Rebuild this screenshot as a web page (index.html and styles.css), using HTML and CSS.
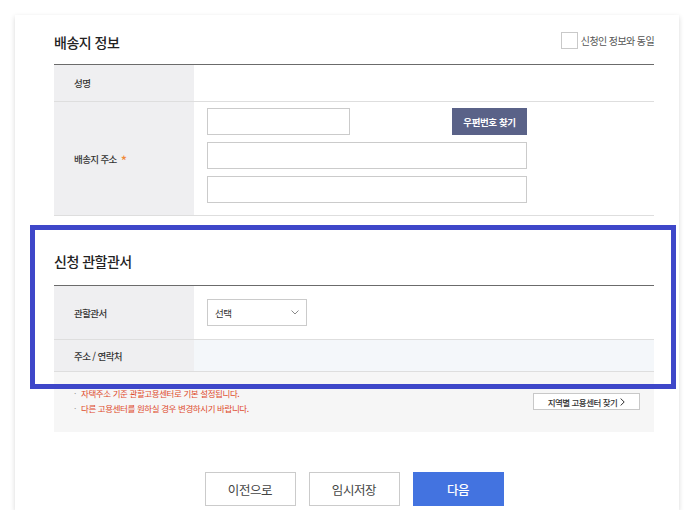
FILE: index.html
```html
<!DOCTYPE html>
<html lang="ko">
<head>
<meta charset="utf-8">
<title>배송지 정보</title>
<link rel="stylesheet" href="styles.css">
</head>
<body>
<div class="card">
  <div class="sec-head">
    <h2 class="sec-title">배송지 정보</h2>
    <label class="same">
      <span class="chk"></span>
      <span class="same-text">신청인 정보와 동일</span>
    </label>
  </div>
  <div class="table">
    <div class="row row-name">
      <div class="th">성명</div>
      <div class="td"></div>
    </div>
    <div class="row row-addr">
      <div class="th">배송지 주소 <span class="req">*</span></div>
      <div class="td td-addr">
        <div class="zip-line">
          <span class="input input-zip"></span>
          <button class="btn-zip" type="button">우편번호 찾기</button>
        </div>
        <span class="input input-wide"></span>
        <span class="input input-wide"></span>
      </div>
    </div>
  </div>

  <div class="sec-head sec-head-2">
    <h2 class="sec-title">신청 관할관서</h2>
  </div>
  <div class="table">
    <div class="row row-office">
      <div class="th">관할관서</div>
      <div class="td td-office">
        <div class="select">
          <span>선택</span>
          <svg class="sel-arrow" width="8" height="5" viewBox="0 0 8 5"><polyline points="0.5,0.5 4,4 7.5,0.5" fill="none" stroke="#8a8a8a" stroke-width="1"/></svg>
        </div>
      </div>
    </div>
    <div class="row row-contact">
      <div class="th">주소 / 연락처</div>
      <div class="td td-contact"></div>
    </div>
  </div>
  <div class="notes">
    <ul class="note-list">
      <li><span class="dot">·</span>자택주소 기준 관할고용센터로 기본 설정됩니다.</li>
      <li><span class="dot">·</span>다른 고용센터를 원하실 경우 변경하시기 바랍니다.</li>
    </ul>
    <button class="btn-find" type="button">지역별 고용센터 찾기
      <svg width="5" height="8" viewBox="0 0 5 8"><polyline points="0.6,0.5 4.2,4 0.6,7.5" fill="none" stroke="#333" stroke-width="1"/></svg>
    </button>
  </div>

  <div class="actions">
    <button class="btn btn-line" type="button">이전으로</button>
    <button class="btn btn-line" type="button">임시저장</button>
    <button class="btn btn-primary" type="button">다음</button>
  </div>

  <div class="highlight"></div>
</div>
</body>
</html>
```

FILE: styles.css
```css
html, body {
  margin: 0;
  padding: 0;
  background: #ffffff;
}
body {
  font-family: "Noto Sans CJK KR", "Noto Sans", sans-serif;
  color: #333;
  padding-top: 15px;
}
.card {
  position: relative;
  margin: 0 15px;
  width: 664px;
  height: 495px;
  box-sizing: border-box;
  padding: 0 25px 0 39px;
  background: #fff;
  box-shadow: 0 2px 5px rgba(0, 0, 0, 0.16);
}
.sec-head {
  display: flex;
  justify-content: space-between;
  align-items: center;
  padding: 15px 0 10px;
}
.sec-head-2 {
  padding: 33px 0 12px;
}
.sec-title {
  margin: 0;
  font-size: 14px;
  line-height: 24px;
  font-weight: 500;
  letter-spacing: -0.5px;
  color: #222;
}
.same {
  display: flex;
  align-items: center;
  gap: 3px;
  margin-bottom: 4px;
}
.chk {
  width: 15px;
  height: 15px;
  border: 1px solid #c9c9c9;
  background: #fff;
}
.same-text {
  font-size: 10px;
  letter-spacing: -0.6px;
  color: #555;
}
.table {
  border-top: 1px solid #6b6b6b;
}
.row {
  display: grid;
  grid-template-columns: 140px 1fr;
  border-bottom: 1px solid #dedede;
}
.th {
  background: #efeff1;
  display: flex;
  align-items: center;
  padding-left: 20px;
  font-size: 9.5px;
  font-weight: 500;
  letter-spacing: -0.6px;
  color: #333;
}
.req {
  color: #ef8a3c;
  margin-left: 4px;
  font-size: 13px;
  line-height: 0;
  position: relative;
  top: 2px;
}
.row-name { height: 36px; }
.row-addr { height: 113px; }
.td-addr {
  padding: 6px 0 12px 13px;
  display: flex;
  flex-direction: column;
  gap: 7px;
}
.zip-line {
  width: 320px;
  display: flex;
  justify-content: space-between;
}
.input {
  display: block;
  box-sizing: border-box;
  height: 27px;
  border: 1px solid #cbcbcb;
  background: #fff;
}
.input-zip { width: 143px; }
.input-wide { width: 320px; }
.btn-zip {
  width: 75px;
  height: 27px;
  border: 0;
  margin: 0;
  padding: 0;
  background: #5a6288;
  color: #fff;
  font-family: inherit;
  font-size: 9.5px;
  font-weight: 700;
  letter-spacing: -0.4px;
}
.row-office { height: 53px; }
.td-office {
  padding: 13px 0 0 13px;
}
.select {
  box-sizing: border-box;
  width: 100px;
  height: 27px;
  border: 1px solid #cbcbcb;
  display: flex;
  align-items: center;
  justify-content: space-between;
  padding: 0 7px 0 7px;
  font-size: 9.5px;
  letter-spacing: -0.4px;
  color: #333;
}
.row-contact { height: 31px; }
.td-contact { background: #f4f7fa; }
.notes {
  height: 60px;
  box-sizing: border-box;
  background: #f6f6f6;
  padding: 14px 14px 0 20px;
  display: flex;
  justify-content: space-between;
  align-items: flex-start;
}
.note-list {
  margin: 0;
  padding: 0;
  list-style: none;
  font-size: 8.5px;
  line-height: 15px;
  letter-spacing: -0.4px;
  color: #de4a2c;
}
.dot {
  display: inline-block;
  width: 7px;
  color: #999;
}
.btn-find {
  margin: 7px 0 0;
  width: 107px;
  height: 17px;
  box-sizing: border-box;
  border: 1px solid #c8c8c8;
  background: #fff;
  padding: 0;
  display: flex;
  align-items: center;
  justify-content: center;
  gap: 3px;
  font-family: inherit;
  font-size: 8.5px;
  font-weight: 500;
  letter-spacing: -0.5px;
  color: #333;
}
.actions {
  margin-top: 40px;
  display: flex;
  justify-content: center;
  gap: 13px;
}
.btn {
  width: 91px;
  height: 34px;
  box-sizing: border-box;
  margin: 0;
  padding: 0;
  font-family: inherit;
  font-size: 12.5px;
  letter-spacing: -0.4px;
}
.btn-line {
  background: #fff;
  border: 1px solid #cbcbcb;
  color: #444;
}
.btn-primary {
  background: #4373e0;
  border: 0;
  color: #fff;
  font-weight: 500;
}
.highlight {
  position: absolute;
  left: 15px;
  top: 210px;
  width: 646px;
  height: 164px;
  box-sizing: border-box;
  border: 5px solid #3e47c9;
  pointer-events: none;
}
```
